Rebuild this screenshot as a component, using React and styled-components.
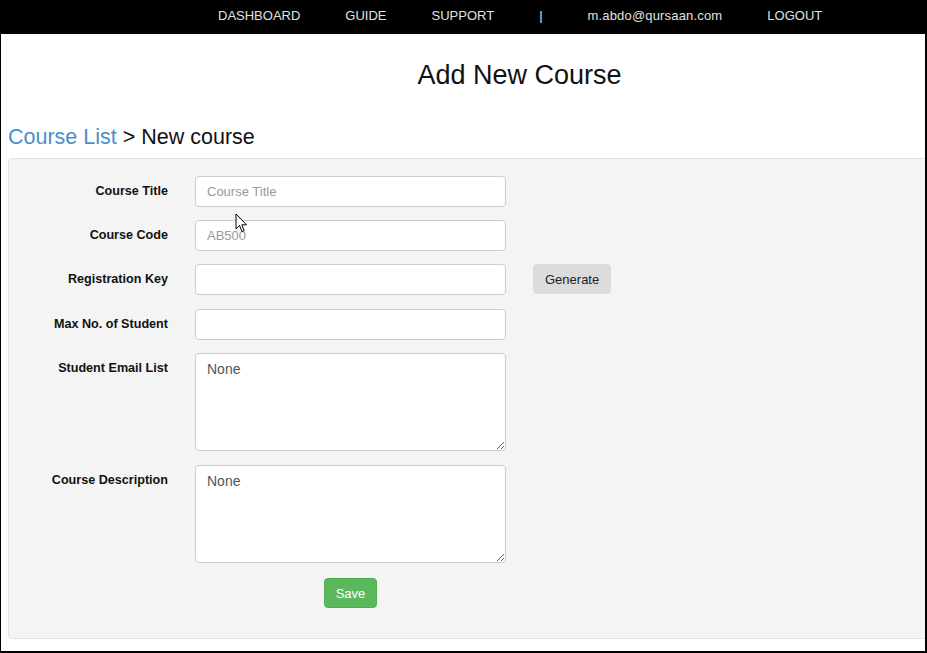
import React from "react";
import styled, { createGlobalStyle } from "styled-components";

const GlobalStyle = createGlobalStyle`
  html, body {
    margin: 0;
    padding: 0;
    background: #fff;
    font-family: "Liberation Sans", Arial, sans-serif;
  }
`;

const Frame = styled.div`
  position: relative;
  width: 927px;
  height: 653px;
  box-sizing: border-box;
  border-left: 1px solid #000;
  border-right: 2px solid #000;
  border-bottom: 2px solid #000;
  overflow: hidden;
  background: #fff;
`;

const NavBar = styled.nav`
  display: flex;
  align-items: center;
  height: 34px;
  margin-left: -1px;
  padding-left: 218px;
  gap: 45px;
  background: #000;
`;

const NavItem = styled.a`
  color: #e2e2e2;
  font-size: 13px;
  text-decoration: none;
  text-transform: ${(p) => (p.$plain ? "none" : "uppercase")};
  letter-spacing: ${(p) => (p.$plain ? "0.17px" : "0")};
  line-height: 1;
  margin-top: -3px;
`;

const PageTitle = styled.h1`
  margin: 26px 0 0;
  padding-left: 113px;
  text-align: center;
  font-size: 27px;
  line-height: 30px;
  font-weight: normal;
  color: #111;
`;

const Crumbs = styled.h3`
  margin: 33px 0 0 7px;
  font-size: 21.5px;
  line-height: 28px;
  font-weight: normal;
  color: #111;
`;

const CrumbLink = styled.a`
  color: #4a8fcc;
  text-decoration: none;
`;

const Well = styled.div`
  margin: 7px 0 0 7px;
  width: 960px;
  box-sizing: border-box;
  padding: 17px 0 30px;
  background: #f4f4f4;
  border: 1px solid #e3e3e3;
  border-radius: 4px;
`;

const Row = styled.div`
  display: flex;
  align-items: flex-start;
  margin-bottom: ${(p) => p.$gap || 13}px;
`;

const Label = styled.label`
  width: 159px;
  flex: none;
  box-sizing: border-box;
  padding-top: 6px;
  margin-right: 27px;
  text-align: right;
  font-size: 12.6px;
  line-height: 18px;
  font-weight: bold;
  color: #111;
`;

const Input = styled.input`
  width: 311px;
  height: 31px;
  box-sizing: border-box;
  padding: 0 11px;
  border: 1px solid #ccc;
  border-radius: 4px;
  background: #fff;
  font-family: inherit;
  font-size: 13px;
  color: #555;
  &::placeholder {
    color: #999;
  }
`;

const TextArea = styled.textarea`
  width: 311px;
  height: 98px;
  box-sizing: border-box;
  padding: 5px 11px;
  border: 1px solid #ccc;
  border-radius: 4px;
  background: #fff;
  font-family: inherit;
  font-size: 14px;
  line-height: 20px;
  color: #555;
  resize: vertical;
`;

const Button = styled.button`
  height: ${(p) => p.$h || 30}px;
  padding: 0 ${(p) => p.$px || 12}px;
  border: 1px solid ${(p) => (p.$primary ? "#4cae4c" : "#dcdcdc")};
  border-radius: 4px;
  background: ${(p) => (p.$primary ? "#5cb85c" : "#dcdcdc")};
  color: ${(p) => (p.$primary ? "#fff" : "#222")};
  font-family: inherit;
  font-size: 13px;
  cursor: pointer;
`;

const SideButton = styled(Button)`
  margin-left: 27px;
`;

const SaveRow = styled.div`
  display: flex;
  justify-content: center;
  width: 311px;
  margin-left: 186px;
  padding-top: 1px;
`;

const Pointer = styled.svg`
  position: absolute;
  left: 234px;
  top: 213px;
  pointer-events: none;
`;

export default function App() {
  return (
    <>
      <GlobalStyle />
      <Frame>
        <NavBar>
          <NavItem href="#">Dashboard</NavItem>
          <NavItem href="#">Guide</NavItem>
          <NavItem href="#">Support</NavItem>
          <NavItem as="span">|</NavItem>
          <NavItem href="#" $plain>m.abdo@qursaan.com</NavItem>
          <NavItem href="#">Logout</NavItem>
        </NavBar>

        <PageTitle>Add New Course</PageTitle>

        <Crumbs>
          <CrumbLink href="#">Course List</CrumbLink> &gt; New course
        </Crumbs>

        <Well>
          <Row>
            <Label>Course Title</Label>
            <Input placeholder="Course Title" />
          </Row>
          <Row>
            <Label>Course Code</Label>
            <Input placeholder="AB500" />
          </Row>
          <Row $gap={14}>
            <Label>Registration Key</Label>
            <Input />
            <SideButton $px={11}>Generate</SideButton>
          </Row>
          <Row>
            <Label>Max No. of Student</Label>
            <Input />
          </Row>
          <Row $gap={14}>
            <Label>Student Email List</Label>
            <TextArea defaultValue="None" />
          </Row>
          <Row $gap={14}>
            <Label>Course Description</Label>
            <TextArea defaultValue="None" />
          </Row>
          <SaveRow>
            <Button $primary $h={30} $px={11}>Save</Button>
          </SaveRow>
        </Well>

        <Pointer width="13" height="21" viewBox="0 0 13 21">
          <path
            d="M1 1 L1 16 L4.5 12.5 L7 18.5 L9.2 17.6 L6.8 11.8 L11.5 11.8 Z"
            fill="#fff"
            stroke="#000"
            strokeWidth="1"
            strokeLinejoin="round"
          />
        </Pointer>
      </Frame>
    </>
  );
}
